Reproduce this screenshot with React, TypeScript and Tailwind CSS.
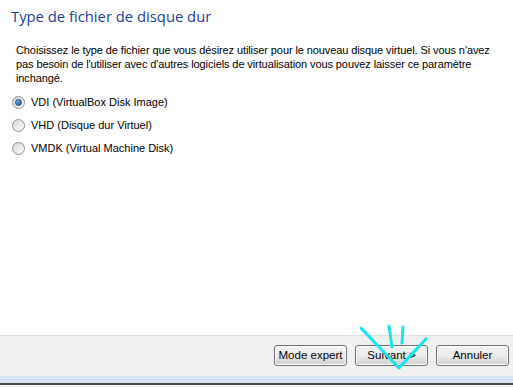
import React from "react";

const Radio = ({ checked, label }: { checked?: boolean; label: string }) => (
  <label className="flex h-[23px] items-center gap-[6px]">
    <span className="flex h-[13px] w-[13px] items-center justify-center rounded-full border border-[#8e8f8f] bg-gradient-to-br from-[#d8d8d8] to-[#fbfbfb]">
      {checked && (
        <span className="h-[7px] w-[7px] rounded-full border border-[#1b3f7a] bg-gradient-to-br from-[#7fb2e8] to-[#1d5caa]" />
      )}
    </span>
    <span>{label}</span>
  </label>
);

const Button = ({ children }: { children: React.ReactNode }) => (
  <button className="h-[21px] w-[73px] rounded-[3px] border border-[#707070] bg-gradient-to-b from-[#f2f2f2] via-[#ebebeb] to-[#cfcfcf] text-[11.5px] text-black shadow-[inset_0_0_0_1px_#fcfcfc]">
    {children}
  </button>
);

export default function App() {
  return (
    <div className="relative flex h-[387px] w-[513px] flex-col overflow-hidden bg-white font-['Liberation_Sans',Tahoma,sans-serif] text-[11px] text-black">
      <div className="flex-1">
        <h1 className="pl-[11px] pt-[5px] font-['Open_Sans',sans-serif] text-[14.8px] leading-[22px] text-[#1a3c9c]">
          Type de fichier de disque dur
        </h1>
        <p className="mt-[16px] px-[16px] pr-[12px] leading-[14px] tracking-[-0.1px]">
          Choisissez le type de fichier que vous désirez utiliser pour le nouveau disque virtuel. Si vous n'avez
          pas besoin de l'utiliser avec d'autres logiciels de virtualisation vous pouvez laisser ce paramètre
          inchangé.
        </p>
        <div className="mt-[6px] flex flex-col pl-[12px]">
          <Radio checked label="VDI (VirtualBox Disk Image)" />
          <Radio label="VHD (Disque dur Virtuel)" />
          <Radio label="VMDK (Virtual Machine Disk)" />
        </div>
      </div>
      <div className="flex h-[41px] items-start justify-end gap-[8px] border-t border-[#dfdfdf] bg-[#f0f0f0] pr-[4px] pt-[9px]">
        <Button>Mode expert</Button>
        <Button>Suivant &gt;</Button>
        <Button>Annuler</Button>
      </div>
      <div className="h-[7px] bg-[#d6e5f5]" />
      <div className="h-[2px] bg-[#4a4a4a]" />
      <div className="h-[2px] bg-[#f4f4f4]" />
      <svg className="pointer-events-none absolute left-0 top-0" width="513" height="387">
        <g stroke="#14e6f0" strokeWidth="3" fill="none" strokeLinecap="round" strokeLinejoin="round">
          <path d="M361 328 L399 368 L426 339" />
          <path d="M389 326 L392 347" />
          <path d="M403 327 L402 343" />
        </g>
      </svg>
    </div>
  );
}
